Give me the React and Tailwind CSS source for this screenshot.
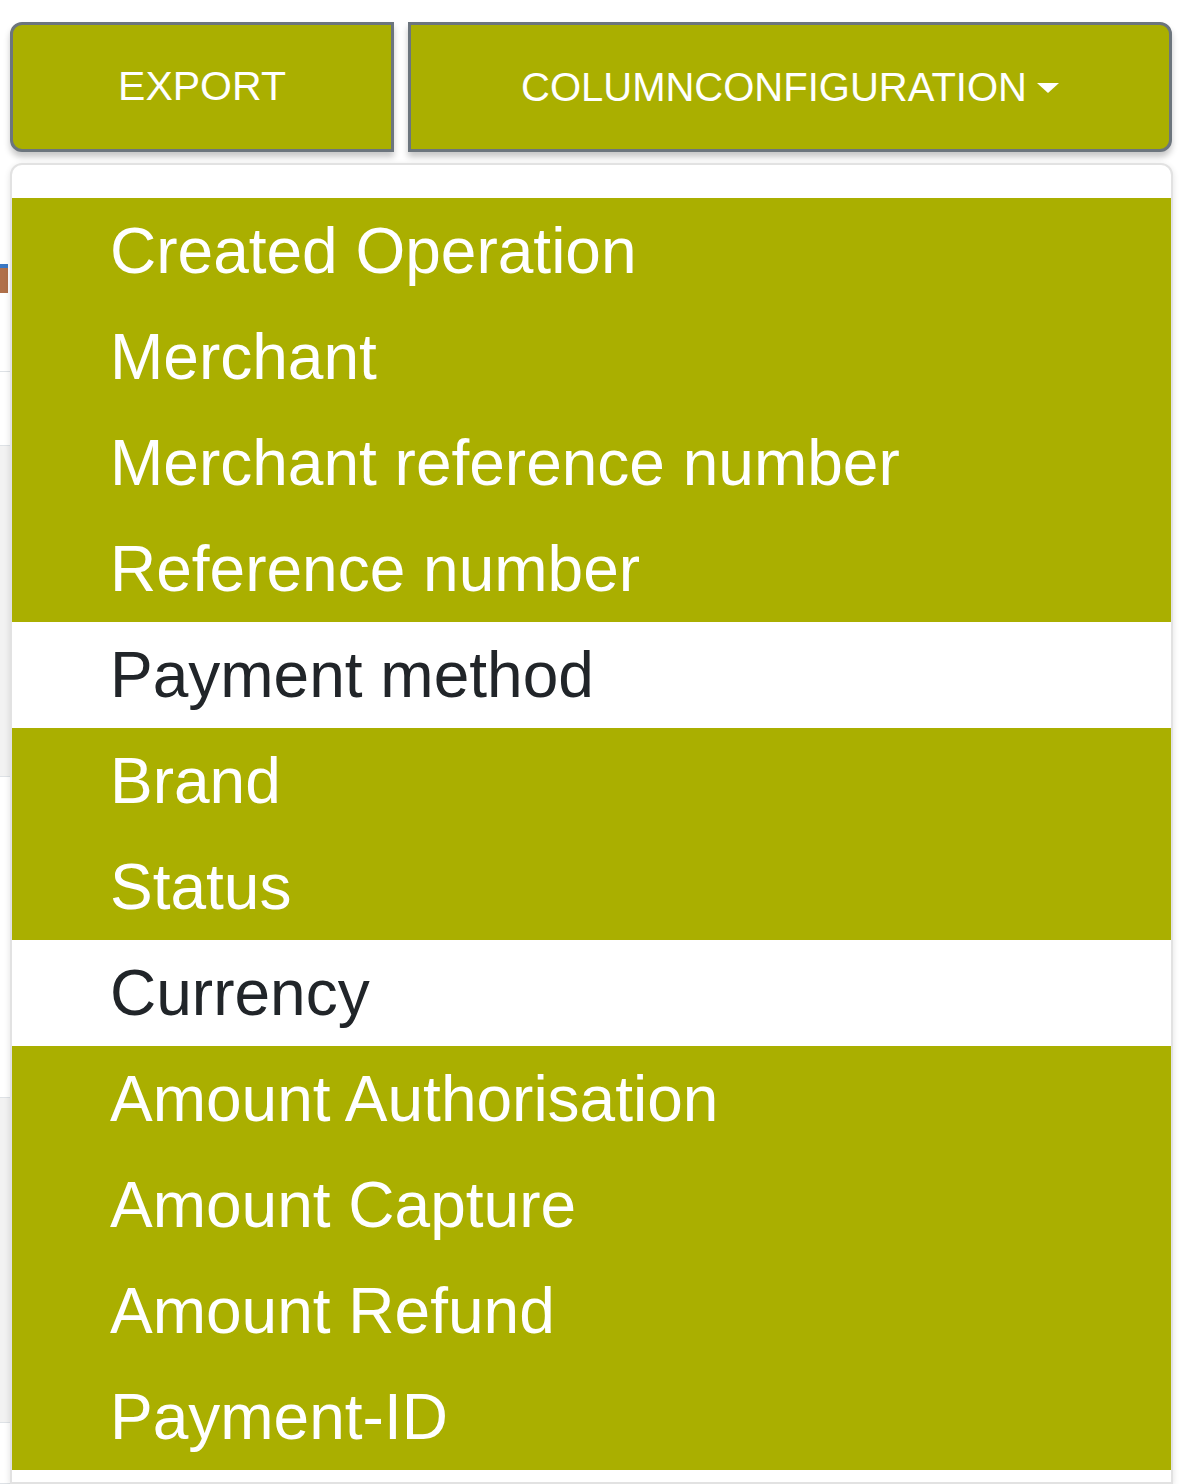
import React from 'react';

const columns = [
  { label: 'Created Operation', active: true },
  { label: 'Merchant', active: true },
  { label: 'Merchant reference number', active: true },
  { label: 'Reference number', active: true },
  { label: 'Payment method', active: false },
  { label: 'Brand', active: true },
  { label: 'Status', active: true },
  { label: 'Currency', active: false },
  { label: 'Amount Authorisation', active: true },
  { label: 'Amount Capture', active: true },
  { label: 'Amount Refund', active: true },
  { label: 'Payment-ID', active: true },
];

// table rows peeking out behind the open menu
const bgRows = [
  { h: 'h-[212px]', bg: 'bg-white', icon: true },
  { h: 'h-[74px]', bg: 'bg-white' },
  { h: 'h-[331px]', bg: 'bg-[#f2f2f2]' },
  { h: 'h-[321px]', bg: 'bg-white' },
  { h: 'h-[325px]', bg: 'bg-[#f2f2f2]' },
  { h: 'h-[61px]', bg: 'bg-white' },
];

const App = () => {
  return (
    <div className="relative w-[1202px] h-[1484px] overflow-hidden bg-white font-['Liberation_Sans',Arial,sans-serif]">
      {/* background table */}
      <div className="absolute left-0 top-[160px] w-[1150px]">
        {bgRows.map((r, i) => (
          <div key={i} className={`${r.h} ${r.bg} border-b border-[#dee2e6] relative`}>
            {r.icon && (
              <span className="absolute left-0 top-[104px] w-[8px] h-[29px] bg-[#b0704a] border-t-4 border-[#3b78c4]" />
            )}
          </div>
        ))}
      </div>

      {/* button group */}
      <div className="relative flex pt-[22px] pl-[10px]">
        <button
          type="button"
          className="w-[384px] h-[130px] flex items-center justify-center bg-[#aaaf00] border-[3px] border-[#6c757d] rounded-l-[12px] text-white text-[41px] uppercase shadow-[0_5px_6px_rgba(0,0,0,0.22)]"
        >
          Export
        </button>
        <button
          type="button"
          className="ml-[14px] w-[764px] h-[130px] flex items-center justify-center bg-[#aaaf00] border-[3px] border-[#6c757d] rounded-r-[12px] text-white text-[40px] uppercase shadow-[0_5px_6px_rgba(0,0,0,0.22)]"
        >
          <span>Columnconfiguration</span>
          <span className="ml-[10px] mt-[2px] w-0 h-0 border-t-[10px] border-t-white border-x-[11px] border-x-transparent" />
        </button>
      </div>

      {/* dropdown menu */}
      <div className="absolute left-[10px] top-[163px] w-[1163px] bg-white border-2 border-[#e2e2e2] rounded-t-[12px] pt-[33px] pb-[12px] shadow-[0_2px_6px_rgba(0,0,0,0.12)]">
        {columns.map((c) => (
          <div
            key={c.label}
            className={`h-[106px] flex items-center pl-[98px] text-[64px] leading-none ${
              c.active ? 'bg-[#aaaf00] text-white' : 'bg-white text-[#212529]'
            }`}
          >
            {c.label}
          </div>
        ))}
      </div>
    </div>
  );
};

export default App;
